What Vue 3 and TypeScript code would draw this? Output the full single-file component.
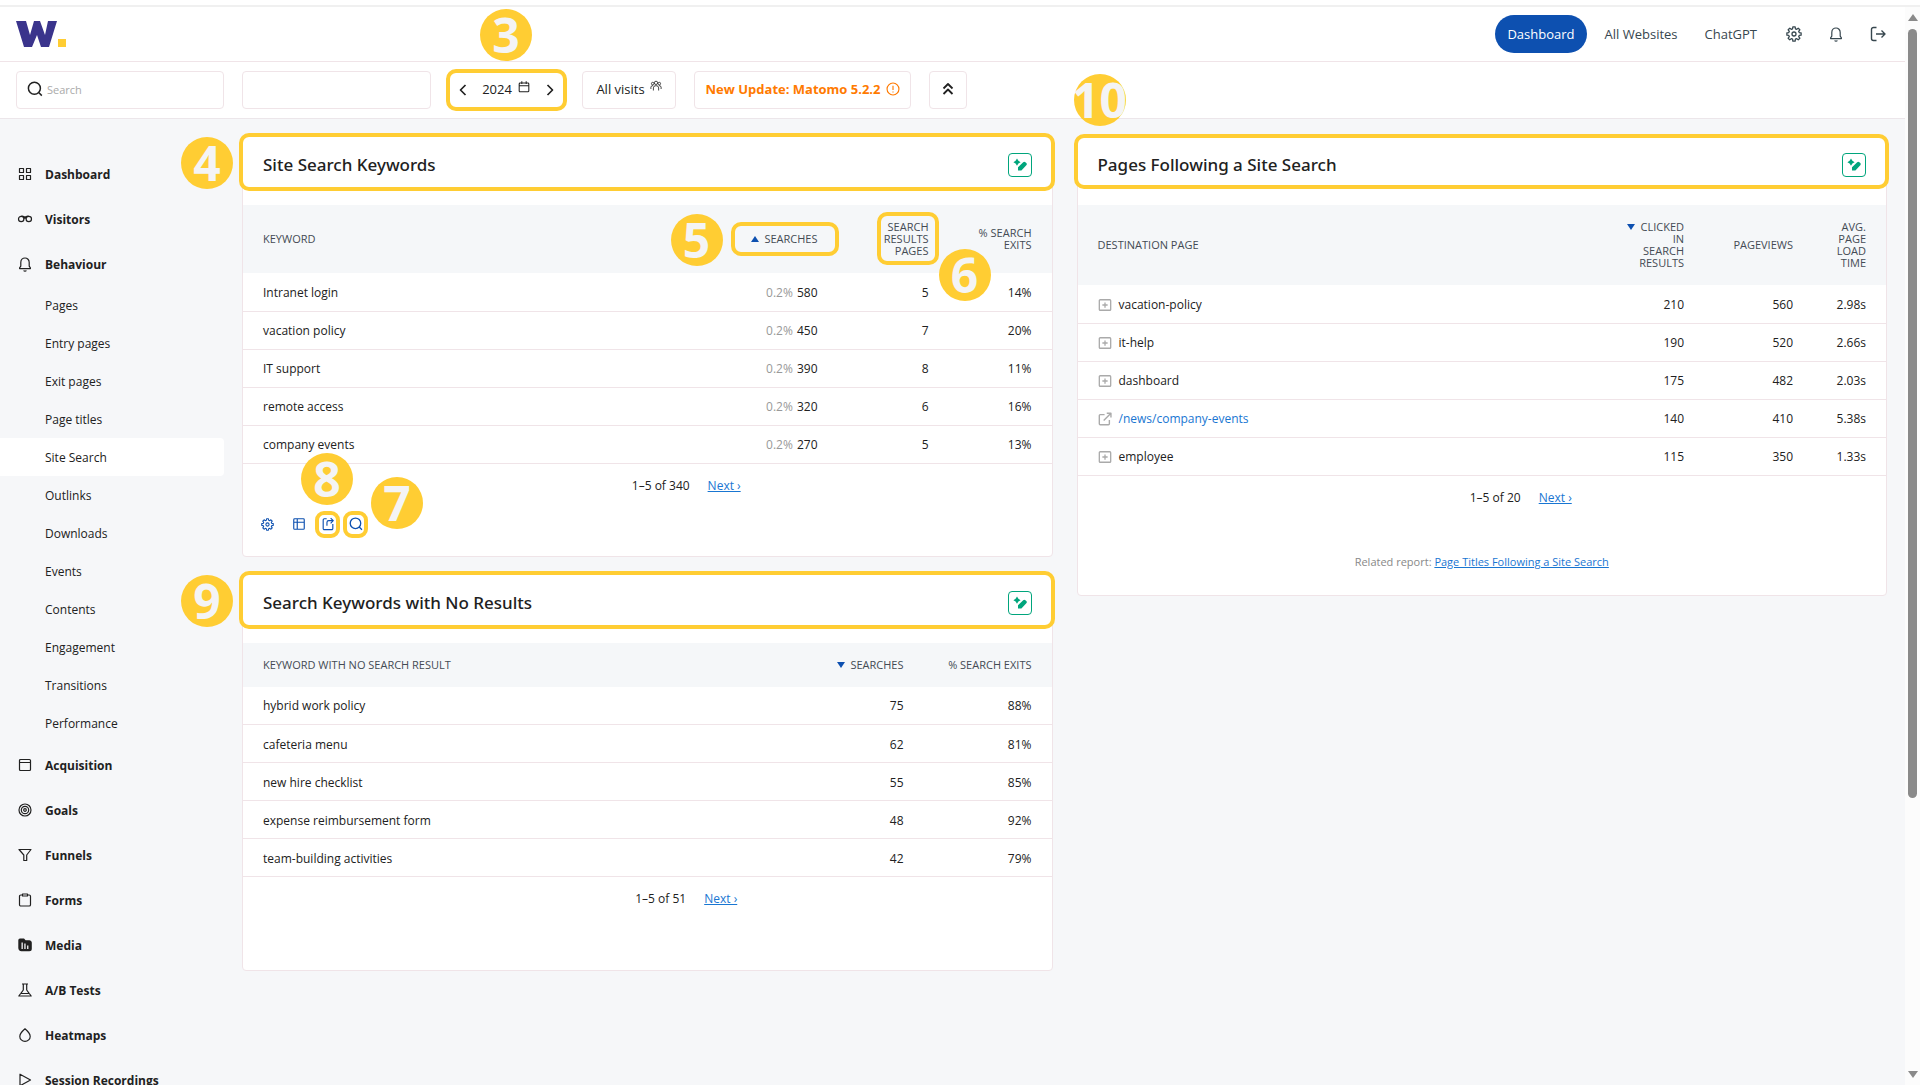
<script setup lang="ts">
import { h } from 'vue'

interface Shape {
  d: string
  fill?: boolean
  width?: number
}

interface Column {
  label: string[]
  width?: number
  sort?: 'up' | 'down'
  mark?: string
  badge?: string
}

interface Row {
  label: string
  values: string[]
  share?: string
  icon?: string
  link?: boolean
}

interface Report {
  id: string
  title: string
  badge: string
  badgeClass: string
  columns: Column[]
  rows: Row[]
  range: string
}

function ring(cx: number, cy: number, r: number): string {
  return `M${cx - r} ${cy}a${r} ${r} 0 1 0 ${2 * r} 0a${r} ${r} 0 1 0 ${-2 * r} 0z`
}

// Eight rounded teeth around the centre of a 16-unit box
function gear(): string {
  const points: string[] = []
  for (let i = 0; i < 8; i++) {
    const base = (i * Math.PI) / 4
    for (const [offset, radius] of [[-0.26, 5.4], [-0.16, 7.2], [0.16, 7.2], [0.26, 5.4]]) {
      const x = 8 + radius * Math.sin(base + offset)
      const y = 8 - radius * Math.cos(base + offset)
      points.push(`${x.toFixed(2)} ${y.toFixed(2)}`)
    }
  }
  return `M${points.join('L')}Z${ring(8, 8, 2)}`
}

const bell = 'M2.600 12.600V11.800L3.800 10.200V6.400a4.200 4.400 0 0 1 8.400 0V10.200l1.200 1.600v.8zM6.600 14.500a1.600 1.200 0 0 0 2.800 0'

const icons: Record<string, Shape[]> = {
  grid: [{ d: 'M2.500 2.500h4v4h-4zM9.500 2.500h4v4h-4zM2.500 9.500h4v4h-4zM9.500 9.500h4v4h-4z' }],
  visitors: [{ d: ring(4.2, 8, 2.7) + ring(11.8, 8, 2.7) + 'M4.500 5.300C5.800 4.600 7 6 8 6S10.200 4.600 11.500 5.300M6.900 8a1.100 1.100 0 0 1 2.200 0' }],
  bell: [{ d: bell }],
  window: [{ d: 'M3.500 2.500h9a1 1 0 0 1 1 1v9a1 1 0 0 1-1 1h-9a1 1 0 0 1-1-1v-9a1 1 0 0 1 1-1zM2.500 5.500h11' }],
  target: [{ d: ring(8, 8, 6) + ring(8, 8, 3.7) + ring(8, 8, 1.3) }],
  funnel: [{ d: 'M2 2.500h12L9.700 8v5.500H6.800V8z' }],
  clipboard: [{ d: 'M5 3H3.800a1.300 1.300 0 0 0-1.300 1.300v8.400A1.300 1.300 0 0 0 3.800 14h8.400a1.300 1.300 0 0 0 1.300-1.300V4.300A1.300 1.300 0 0 0 12.200 3H11M5.500 2h5v2h-5z' }],
  media: [
    { d: 'M3 1.500h4l1.600 1.700H12.500a2.500 2.500 0 0 1 2.300 2.300v6.200a2.500 2.500 0 0 1-2.500 2.500H4.500A3.300 3.300 0 0 1 1.300 11V3.300A1.800 1.800 0 0 1 3 1.500zM4.500 5.500v6.500h1.300V5.500zM7.300 6.500V12h1.300V6.500zM10.100 8.500V12h1.300V8.500z', fill: true },
  ],
  beaker: [{ d: 'M5 2h6M6.300 2v6L3.700 11.600M9.700 2v6l2.600 3.600M3.700 11.500h8.600l1.900 2.500H1.800z' }],
  drop: [{ d: 'M8 1.800C10.500 4 13.200 6.800 13.200 9.400a5.200 4.900 0 0 1-10.400 0C2.800 6.800 5.500 4 8 1.800z' }],
  play: [{ d: 'M3 2.200v11.600L13.500 8z' }],
  gear: [{ d: gear(), width: 1.3 }],
  logout: [{ d: 'M6.500 1.500h-3a2 2 0 0 0-2 2v9a2 2 0 0 0 2 2h3M6 8h9M11.500 4.500 15 8l-3.500 3.500', width: 1.4 }],
  search: [{ d: ring(7.4, 7.2, 6) + 'M11.700 11.500 14.800 14.600', width: 1.5 }],
  prev: [{ d: 'M10.500 3 5.500 8l5 5', width: 1.7 }],
  next: [{ d: 'M5.500 3l5 5-5 5', width: 1.7 }],
  calendar: [{ d: 'M3.500 3.500h9a1 1 0 0 1 1 1v8a1 1 0 0 1-1 1h-9a1 1 0 0 1-1-1v-8a1 1 0 0 1 1-1zM2.500 6.500h11M5.500 1.500v3M10.500 1.500v3' }],
  people: [{ d: ring(8, 3.8, 2.2) + ring(3.6, 4.8, 1.7) + ring(12.4, 4.8, 1.7) + 'M4.500 14V10.500a3.500 3 0 0 1 7 0v3.500M1.200 12V9.500a2.600 2.400 0 0 1 3-2M14.800 12V9.500a2.600 2.400 0 0 0-3-2', width: 1.1 }],
  alert: [{ d: ring(8, 8, 6.8) + 'M8 4.300v4.800M8 10.800v1.300', width: 1.3 }],
  collapse: [{ d: 'M3.500 7.500 8 3l4.500 4.500M3.500 13 8 8.500l4.500 4.500', width: 1.8 }],
  pen: [{ d: 'M5 1.600 6.400 3.800 8.600 5.200 6.400 6.600 5 8.800 3.600 6.600 1.400 5.200 3.600 3.800zM11.200 5.200a1.600 1.600 0 0 1 2.200 0l.900.900a1.600 1.600 0 0 1 0 2.200L9.400 13.400H6v-3.200z', fill: true }],
  table: [{ d: 'M3 2h10a1 1 0 0 1 1 1v10a1 1 0 0 1-1 1H3a1 1 0 0 1-1-1V3a1 1 0 0 1 1-1zM2 6h12M6 2v12', width: 1.3 }],
  share: [{ d: 'M6.500 2H3.800A1.300 1.300 0 0 0 2.500 3.300v9.900a1.300 1.300 0 0 0 1.300 1.300h8.400a1.300 1.300 0 0 0 1.300-1.300V8M6.800 10V6.200a2 2 0 0 1 2-2H14M11 1.200l3 3-3 3', width: 1.3 }],
  expand: [{ d: 'M2.500 2h11a1 1 0 0 1 1 1v10a1 1 0 0 1-1 1h-11a1 1 0 0 1-1-1V3a1 1 0 0 1 1-1zM8 5v6M5 8h6', width: 1.5 }],
  outlink: [{ d: 'M7.500 3H2.500a1 1 0 0 0-1 1v9.500a1 1 0 0 0 1 1H12a1 1 0 0 0 1-1V9M10 1.500h4.800v4.800M14.500 1.800 6.500 9.800', width: 1.6 }],
}

function Icon(props: { name: string; size?: number }) {
  const size = props.size ?? 14
  return h(
    'svg',
    { class: 'icon', width: size, height: size, viewBox: '0 0 16 16', fill: 'none', 'aria-hidden': 'true' },
    icons[props.name].map((shape) =>
      h('path', {
        d: shape.d,
        fill: shape.fill ? 'currentColor' : 'none',
        'fill-rule': 'evenodd',
        stroke: shape.fill ? 'none' : 'currentColor',
        'stroke-width': shape.width ?? 1.2,
        'stroke-linejoin': 'round',
      }),
    ),
  )
}
Icon.props = ['name', 'size']

const behaviourPages = [
  'Pages', 'Entry pages', 'Exit pages', 'Page titles', 'Site Search', 'Outlinks',
  'Downloads', 'Events', 'Contents', 'Engagement', 'Transitions', 'Performance',
]

const menu: { label: string; icon: string; children?: string[] }[] = [
  { label: 'Dashboard', icon: 'grid' },
  { label: 'Visitors', icon: 'visitors' },
  { label: 'Behaviour', icon: 'bell', children: behaviourPages },
  { label: 'Acquisition', icon: 'window' },
  { label: 'Goals', icon: 'target' },
  { label: 'Funnels', icon: 'funnel' },
  { label: 'Forms', icon: 'clipboard' },
  { label: 'Media', icon: 'media' },
  { label: 'A/B Tests', icon: 'beaker' },
  { label: 'Heatmaps', icon: 'drop' },
  { label: 'Session Recordings', icon: 'play' },
]

const keywords: Report = {
  id: 'keywords',
  title: 'Site Search Keywords',
  badge: '4',
  badgeClass: 'badge-side',
  columns: [
    { label: ['Keyword'] },
    { label: ['Searches'], width: 77, sort: 'up', mark: 'mark-sort', badge: '5' },
    { label: ['Search', 'Results', 'Pages'], width: 111, mark: 'mark-pages', badge: '6' },
    { label: ['% Search', 'Exits'], width: 113 },
  ],
  rows: [
    { label: 'Intranet login', share: '0.2%', values: ['580', '5', '14%'] },
    { label: 'vacation policy', share: '0.2%', values: ['450', '7', '20%'] },
    { label: 'IT support', share: '0.2%', values: ['390', '8', '11%'] },
    { label: 'remote access', share: '0.2%', values: ['320', '6', '16%'] },
    { label: 'company events', share: '0.2%', values: ['270', '5', '13%'] },
  ],
  range: '1–5 of 340',
}

const noResults: Report = {
  id: 'no-results',
  title: 'Search Keywords with No Results',
  badge: '9',
  badgeClass: 'badge-side',
  columns: [
    { label: ['Keyword with No Search Result'] },
    { label: ['Searches'], width: 82, sort: 'down' },
    { label: ['% Search Exits'], width: 138 },
  ],
  rows: [
    { label: 'hybrid work policy', values: ['75', '88%'] },
    { label: 'cafeteria menu', values: ['62', '81%'] },
    { label: 'new hire checklist', values: ['55', '85%'] },
    { label: 'expense reimbursement form', values: ['48', '92%'] },
    { label: 'team-building activities', values: ['42', '79%'] },
  ],
  range: '1–5 of 51',
}

const following: Report = {
  id: 'following',
  title: 'Pages Following a Site Search',
  badge: '10',
  badgeClass: 'badge-top',
  columns: [
    { label: ['Destination Page'] },
    { label: ['Clicked', 'in', 'Search', 'Results'], width: 70, sort: 'down' },
    { label: ['Pageviews'], width: 109 },
    { label: ['Avg.', 'Page', 'Load', 'Time'], width: 83 },
  ],
  rows: [
    { label: 'vacation-policy', icon: 'expand', values: ['210', '560', '2.98s'] },
    { label: 'it-help', icon: 'expand', values: ['190', '520', '2.66s'] },
    { label: 'dashboard', icon: 'expand', values: ['175', '482', '2.03s'] },
    { label: '/news/company-events', icon: 'outlink', link: true, values: ['140', '410', '5.38s'] },
    { label: 'employee', icon: 'expand', values: ['115', '350', '1.33s'] },
  ],
  range: '1–5 of 20',
}

const reportColumns: Report[][] = [[keywords, noResults], [following]]
</script>

<template>
  <div class="app">
    <div class="frame">
      <div class="page">
        <header class="topbar">
          <a class="logo" href="#" aria-label="Home">
            <svg width="50" height="26" viewBox="0 0 50 26" aria-hidden="true">
              <path d="M0 0h10l4 14 4-14h6l5 14 3-14h9L33 26h-8l-4-12-5 12H8z" fill="#3a348c" />
              <path d="M42 18h8v8h-8z" fill="#ffcd33" />
            </svg>
          </a>
          <nav class="topnav" aria-label="Main">
            <a class="pill" href="#">Dashboard</a>
            <a href="#">All Websites</a>
            <a href="#">ChatGPT</a>
            <a href="#" aria-label="Administration"><Icon name="gear" :size="16" /></a>
            <a href="#" aria-label="Notifications"><Icon name="bell" :size="16" /></a>
            <a href="#" aria-label="Sign out"><Icon name="logout" :size="16" /></a>
          </nav>
        </header>

        <div class="toolbar">
          <label class="box search">
            <Icon name="search" :size="16" />
            <input type="text" placeholder="Search" aria-label="Search" />
          </label>
          <button class="box site" type="button" aria-label="Choose website"></button>
          <div class="period">
            <span class="badge badge-period">3</span>
            <button type="button" aria-label="Previous period"><Icon name="prev" :size="16" /></button>
            <button class="date" type="button">2024 <Icon name="calendar" :size="14" /></button>
            <button type="button" aria-label="Next period"><Icon name="next" :size="16" /></button>
          </div>
          <button class="box segment" type="button">All visits <Icon name="people" :size="12" /></button>
          <button class="box update" type="button">New Update: Matomo 5.2.2 <Icon name="alert" :size="14" /></button>
          <button class="box collapse" type="button" aria-label="Collapse"><Icon name="collapse" :size="16" /></button>
        </div>

        <div class="body">
          <nav class="sidebar" aria-label="Reports">
            <ul>
              <li v-for="item in menu" :key="item.label">
                <a class="item" href="#"><Icon :name="item.icon" :size="16" />{{ item.label }}</a>
                <ul v-if="item.children">
                  <li v-for="child in item.children" :key="child">
                    <a class="sub" :class="{ active: child === 'Site Search' }" href="#">{{ child }}</a>
                  </li>
                </ul>
              </li>
            </ul>
          </nav>

          <main class="reports">
            <div v-for="(reports, index) in reportColumns" :key="index" class="stack">
              <section v-for="report in reports" :key="report.id" class="card" :class="report.id">
                <header class="card-head">
                  <span class="mark mark-head"></span>
                  <span class="badge" :class="report.badgeClass">{{ report.badge }}</span>
                  <h2>{{ report.title }}</h2>
                  <button class="insight" type="button" aria-label="Explain report"><Icon name="pen" :size="16" /></button>
                </header>
                <table>
                  <colgroup>
                    <col v-for="(column, c) in report.columns" :key="c" :style="column.width ? { width: column.width + 'px' } : {}" />
                  </colgroup>
                  <thead>
                    <tr>
                      <th v-for="(column, c) in report.columns" :key="c" scope="col">
                        <span v-if="column.mark" class="mark" :class="column.mark"></span>
                        <span v-if="column.badge" class="badge" :class="'badge-' + column.badge">{{ column.badge }}</span>
                        <span v-for="(line, l) in column.label" :key="l" class="line">
                          <span v-if="column.sort && l === 0" class="arrow" :class="column.sort"></span>{{ line }}
                        </span>
                      </th>
                    </tr>
                  </thead>
                  <tbody>
                    <tr v-for="row in report.rows" :key="row.label">
                      <td>
                        <div class="cell">
                          <Icon v-if="row.icon" :name="row.icon" :size="14" />
                          <a v-if="row.link" href="#">{{ row.label }}</a>
                          <template v-else>{{ row.label }}</template>
                        </div>
                      </td>
                      <td v-for="(value, v) in row.values" :key="v">
                        <span v-if="v === 0 && row.share" class="share">{{ row.share }}</span>{{ value }}
                      </td>
                    </tr>
                  </tbody>
                </table>
                <div class="pager"><span>{{ report.range }}</span><a href="#">Next ›</a></div>
                <div v-if="report.id === 'keywords'" class="actions">
                  <button type="button" aria-label="Configure"><Icon name="gear" :size="13" /></button>
                  <button type="button" aria-label="Change view"><Icon name="table" :size="14" /></button>
                  <button class="ringed" type="button" aria-label="Export"><Icon name="share" :size="14" /><span class="badge badge-8">8</span></button>
                  <button class="ringed" type="button" aria-label="Filter rows"><Icon name="search" :size="14" /><span class="badge badge-7">7</span></button>
                </div>
                <p v-if="report.id === 'following'" class="related">
                  Related report: <a href="#">Page Titles Following a Site Search</a>
                </p>
              </section>
            </div>
          </main>
        </div>
      </div>

      <div class="scrollbar" aria-hidden="true">
        <span class="step step-up"></span>
        <div class="track"><div class="thumb"></div></div>
        <span class="step step-down"></span>
      </div>
    </div>
  </div>
</template>

<style>
body {
  background: #f6f7f9;
}
</style>

<style scoped>
* {
  box-sizing: border-box;
}

.app {
  height: 100vh;
  overflow: hidden;
  padding-top: 5px;
  background: #fff;
  color: #212121;
  font: 12px/16px "Open Sans", "Noto Sans", sans-serif;
}

.frame {
  display: flex;
  height: 100%;
  border-top: 2px solid #f0f0f0;
}

.page {
  display: flex;
  flex-direction: column;
  flex: 1;
  min-width: 0;
}

.icon {
  display: block;
  flex: none;
}

a {
  color: #1976d2;
}

ul {
  margin: 0;
  padding: 0;
  list-style: none;
}

button {
  padding: 0;
  border: 0;
  background: none;
  color: inherit;
  font: inherit;
  cursor: pointer;
}

.topbar {
  display: flex;
  flex: none;
  align-items: center;
  justify-content: space-between;
  height: 55px;
  padding: 0 11px 0 16px;
  border-bottom: 1px solid #f0e4e8;
}

.logo svg {
  display: block;
}

.topnav {
  display: flex;
  align-items: center;
  font-size: 13px;
  line-height: 18px;
}

.topnav a {
  padding: 0 11px 0 16px;
  color: #37474f;
  text-decoration: none;
}

.topnav a.pill {
  margin-right: 2px;
  padding: 10px 12px;
  border-radius: 19px;
  background: #0d50b0;
  color: #fff;
}

.topnav a:nth-child(n + 4) {
  padding: 0 8px 0 18px;
}

.toolbar {
  display: flex;
  flex: none;
  align-items: center;
  gap: 18px;
  height: 57px;
  padding: 0 16px;
  border-bottom: 1px solid #ece6ea;
  font-size: 13px;
  line-height: 18px;
}

.box {
  display: flex;
  align-items: center;
  height: 38px;
  padding-bottom: 2px;
  border: 1px solid #f0e4e8;
  border-radius: 4px;
  background: #fff;
}

.box.search {
  width: 208px;
  gap: 4px;
  padding: 0 10px 2px;
}

.search input {
  flex: 1;
  min-width: 0;
  padding: 2px 0 0;
  border: 0;
  outline: 0;
  background: none;
  font: 11px/16px "Open Sans", "Noto Sans", sans-serif;
}

.search input::placeholder {
  color: #aaa;
  opacity: 1;
}

.site {
  width: 189px;
}

.period {
  position: relative;
  display: flex;
  align-items: center;
  justify-content: space-between;
  width: 121px;
  height: 42px;
  margin: 0 -3px;
  padding: 0 5px;
  border: 4px solid #ffcd33;
  border-radius: 10px;
}

.date,
.segment,
.update {
  display: flex;
  gap: 5px;
}

.date .icon,
.segment .icon {
  margin-bottom: 6px;
}

.segment {
  width: 94px;
  justify-content: center;
}

.update {
  width: 217px;
  justify-content: center;
  color: #ff7a00;
  font-weight: 700;
}

.collapse {
  width: 38px;
  justify-content: center;
}

.body {
  display: flex;
  flex: 1;
  min-height: 0;
  background: #f6f7f9;
}

.sidebar {
  flex: none;
  width: 224px;
  padding-top: 32px;
}

.item,
.sub {
  display: flex;
  align-items: center;
  padding-top: 2px;
  color: #212121;
  text-decoration: none;
}

.item {
  gap: 12px;
  height: 45px;
  padding-left: 17px;
  font-weight: 700;
}

.item .icon {
  margin-bottom: 2px;
}

.sub {
  height: 38px;
  padding-left: 45px;
}

.sub.active {
  border-radius: 0 4px 4px 0;
  background: #fff;
}

.reports {
  display: grid;
  flex: 1;
  grid-template-columns: 1fr 1fr;
  gap: 24px;
  align-items: start;
  min-width: 0;
  padding: 17px 18px 0;
}

.stack {
  display: flex;
  flex-direction: column;
  gap: 17px;
}

.card {
  border: 1px solid #f0e4e8;
  border-radius: 4px;
  background: #fff;
}

.card-head {
  position: relative;
  display: flex;
  align-items: center;
  justify-content: space-between;
  height: 68px;
  padding: 0 20px 12px;
}

h2 {
  margin: 0;
  font: 500 17px/24px "Noto Sans", "Open Sans", sans-serif;
}

.insight {
  display: flex;
  align-items: center;
  justify-content: center;
  width: 24px;
  height: 24px;
  border: 1px solid #00a57c;
  border-radius: 4px;
  color: #00a57c;
}

table {
  width: 100%;
  border-collapse: collapse;
  table-layout: fixed;
}

thead {
  background: #f5f7f9;
}

th {
  position: relative;
  padding: 16px 10px 16px 0;
  color: #444b54;
  font-size: 11px;
  font-weight: 400;
  line-height: 12px;
  text-align: right;
  text-transform: uppercase;
  white-space: nowrap;
}

.line {
  display: flex;
  align-items: center;
  justify-content: flex-end;
}

th:first-child .line {
  justify-content: flex-start;
}

td {
  height: 38px;
  padding: 2px 10px 0 0;
  border-bottom: 1px solid #f0e4e8;
  text-align: right;
  white-space: nowrap;
}

th:first-child,
td:first-child {
  padding-left: 20px;
  text-align: left;
}

th:last-child,
td:last-child {
  padding-right: 20px;
}

.cell {
  display: flex;
  align-items: center;
  gap: 7px;
}

.cell .icon {
  color: #aaa;
}

.cell a {
  text-decoration: none;
}

.share {
  margin-right: 4px;
  color: #999;
}

.arrow {
  flex: none;
  margin-right: 5px;
  border: 4px solid transparent;
}

.arrow.up {
  border-top: 0;
  border-bottom: 6px solid #0d50b0;
}

.arrow.down {
  border-top: 6px solid #0d50b0;
  border-bottom: 0;
}

.pager {
  display: flex;
  justify-content: center;
  gap: 18px;
  padding: 14px 0 13px 78px;
}

.keywords thead tr {
  height: 68px;
}

.actions {
  display: flex;
  align-items: center;
  gap: 3px;
  padding: 4px 0 18px 12px;
  color: #0d50b0;
}

.actions button {
  position: relative;
  display: flex;
  align-items: center;
  justify-content: center;
  width: 25px;
  height: 27px;
}

.actions button:nth-child(2) {
  margin: 0 1px 0 3px;
}

.actions .ringed {
  border: 4px solid #ffcd33;
  border-radius: 9px;
}

.no-results {
  padding-bottom: 50px;
}

.related {
  margin: 0;
  padding: 35px 0 25px;
  color: #888;
  font-size: 11px;
  text-align: center;
}

.mark {
  position: absolute;
  border: 4px solid #ffcd33;
  border-radius: 10px;
}

.mark-head {
  inset: -4px -3px 14px -4px;
}

.following .mark-head {
  inset: -3px -3px 16px -4px;
}

.mark-sort {
  inset: 17px -11px 17px -20px;
}

.mark-pages {
  inset: 7px 0 8px 49px;
}

.badge {
  position: absolute;
  z-index: 1;
  display: flex;
  align-items: center;
  justify-content: center;
  width: 52px;
  height: 52px;
  border-radius: 50%;
  background: #ffcd33;
  color: #f4f4f5;
  font: 700 48px/48px "Open Sans", "Noto Sans", sans-serif;
}

.badge-period {
  top: -64px;
  left: 30px;
}

.badge-side {
  top: 0;
  left: -62px;
}

.badge-top {
  top: -63px;
  left: -4px;
}

.badge-5 {
  top: 9px;
  left: -80px;
}

.badge-6 {
  top: 44px;
  right: -52px;
}

.badge-7 {
  top: -38px;
  left: 24px;
}

.badge-8 {
  top: -62px;
  left: -18px;
}

.scrollbar {
  display: flex;
  flex: none;
  flex-direction: column;
  align-items: center;
  width: 15px;
  padding: 7px 0;
  background: #fcfcfc;
}

.track {
  flex: 1;
  width: 9px;
  padding: 8px 0;
}

.thumb {
  height: calc(74% + 4px);
  border-radius: 5px;
  background: #8a8a8a;
}

.step {
  border: 5px solid transparent;
}

.step-up {
  border-top: 0;
  border-bottom: 7px solid #8a8a8a;
}

.step-down {
  border-top: 7px solid #8a8a8a;
  border-bottom: 0;
}
</style>
